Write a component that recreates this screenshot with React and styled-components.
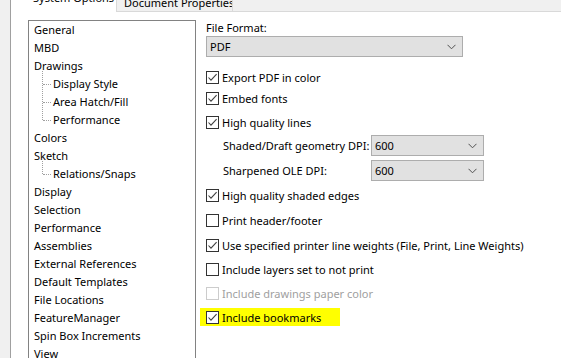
import React from 'react'
import styled, { createGlobalStyle } from 'styled-components'

const GlobalStyle = createGlobalStyle`
  html, body {
    margin: 0;
    padding: 0;
    background: #ffffff;
  }
  body {
    font-family: "Noto Sans", "Open Sans", sans-serif;
    font-size: 11px;
    color: #000000;
  }
`

const treeItems = [
  { label: 'General' },
  { label: 'MBD' },
  { label: 'Drawings', children: ['Display Style', 'Area Hatch/Fill', 'Performance'] },
  { label: 'Colors' },
  { label: 'Sketch', children: ['Relations/Snaps'] },
  { label: 'Display' },
  { label: 'Selection' },
  { label: 'Performance' },
  { label: 'Assemblies' },
  { label: 'External References' },
  { label: 'Default Templates' },
  { label: 'File Locations' },
  { label: 'FeatureManager' },
  { label: 'Spin Box Increments' },
  { label: 'View' },
]

const Chevron = () => (
  <svg width="9" height="6" viewBox="0 0 9 6">
    <polyline points="0.5,0.8 4.5,4.8 8.5,0.8" fill="none" stroke="#505050" strokeWidth="1" />
  </svg>
)

const CheckMark = () => (
  <svg width="11" height="11" viewBox="0 0 11 11">
    <polyline points="1.5,5.5 4,8.2 9.6,2.2" fill="none" stroke="#404040" strokeWidth="1.1" />
  </svg>
)

const Checkbox = ({ checked, disabled }) => (
  <Box $disabled={disabled}>{checked && <CheckMark />}</Box>
)

const Select = ({ value, width }) => (
  <SelectBox $width={width}>
    <span>{value}</span>
    <Chevron />
  </SelectBox>
)

const App = () => {
  return (
    <Window>
      <GlobalStyle />
      <Gutter />
      <Main>
        <TabStrip>
          <Tab $active>
            <TabLabel $active>System Options</TabLabel>
          </Tab>
          <Tab>
            <TabLabel>Document Properties</TabLabel>
          </Tab>
          <TabFiller />
        </TabStrip>

        <Body>
          <Tree>
            {treeItems.map((item, i) => (
              <React.Fragment key={i}>
                <TreeRow>{item.label}</TreeRow>
                {item.children && (
                  <ChildGroup>
                    {item.children.map((c) => (
                      <ChildRow key={c}>{c}</ChildRow>
                    ))}
                  </ChildGroup>
                )}
              </React.Fragment>
            ))}
          </Tree>

          <Options>
            <Label>File Format:</Label>
            <Select value="PDF" width={257} />

            <CheckRow $top={11}>
              <Checkbox checked />
              <span>Export PDF in color</span>
            </CheckRow>
            <CheckRow $top={3}>
              <Checkbox checked />
              <span>Embed fonts</span>
            </CheckRow>
            <CheckRow $top={6}>
              <Checkbox checked />
              <span>High quality lines</span>
            </CheckRow>

            <DpiRow $top={4}>
              <DpiLabel>Shaded/Draft geometry DPI:</DpiLabel>
              <Select value="600" width={113} />
            </DpiRow>
            <DpiRow $top={4}>
              <DpiLabel>Sharpened OLE DPI:</DpiLabel>
              <Select value="600" width={113} />
            </DpiRow>

            <CheckRow $top={5}>
              <Checkbox checked />
              <span>High quality shaded edges</span>
            </CheckRow>
            <CheckRow $top={7}>
              <Checkbox />
              <span>Print header/footer</span>
            </CheckRow>
            <CheckRow $top={7}>
              <Checkbox checked />
              <span>Use specified printer line weights (File, Print, Line Weights)</span>
            </CheckRow>
            <CheckRow $top={6}>
              <Checkbox />
              <span>Include layers set to not print</span>
            </CheckRow>
            <CheckRow $top={6} $disabled>
              <Checkbox disabled />
              <span>Include drawings paper color</span>
            </CheckRow>
            <CheckRow $top={6} $highlight>
              <Checkbox checked />
              <span>Include bookmarks</span>
            </CheckRow>
          </Options>
        </Body>
      </Main>
    </Window>
  )
}

const Window = styled.div`
  display: flex;
  width: 561px;
  height: 358px;
  overflow: hidden;
  background: #ffffff;
`

const Gutter = styled.div`
  width: 10px;
  flex-shrink: 0;
  background: #f0f0f0;
  border-right: 1px solid #a0a0a0;
`

const Main = styled.div`
  flex: 1;
  display: flex;
  flex-direction: column;
  min-width: 0;
`

const TabStrip = styled.div`
  display: flex;
  height: 12px;
  flex-shrink: 0;
  background: #f0f0f0;
`

const Tab = styled.div`
  box-sizing: border-box;
  height: 12px;
  overflow: hidden;
  width: ${(p) => (p.$active ? '106px' : '116px')};
  padding-left: ${(p) => (p.$active ? '22px' : '7px')};
  background: ${(p) => (p.$active ? '#ffffff' : '#f0f0f0')};
  border-right: 1px solid #d9d9d9;
  border-bottom: ${(p) => (p.$active ? 'none' : '1px solid #d9d9d9')};
  white-space: nowrap;
`

const TabLabel = styled.div`
  line-height: 16px;
  margin-top: ${(p) => (p.$active ? '-10px' : '-5px')};
`

const TabFiller = styled.div`
  flex: 1;
  border-bottom: 1px solid #d9d9d9;
`

const Body = styled.div`
  flex: 1;
  display: flex;
  align-items: flex-start;
  padding: 8px 0 0 17px;
  min-height: 0;
`

const Tree = styled.div`
  box-sizing: border-box;
  width: 168px;
  flex-shrink: 0;
  border: 1px solid #828282;
  padding: 0 0 20px 5px;
  height: 400px;
`

const TreeRow = styled.div`
  height: 18px;
  line-height: 18px;
  white-space: nowrap;
`

const ChildGroup = styled.div`
  position: relative;

  &::before {
    content: '';
    position: absolute;
    left: 8px;
    top: -4px;
    bottom: 9px;
    border-left: 1px dotted #a0a0a0;
  }
`

const ChildRow = styled(TreeRow)`
  position: relative;
  padding-left: 19px;

  &::before {
    content: '';
    position: absolute;
    left: 9px;
    top: 9px;
    width: 8px;
    border-top: 1px dotted #a0a0a0;
  }
`

const Options = styled.div`
  display: flex;
  flex-direction: column;
  align-items: flex-start;
  padding-left: 10px;
`

const Label = styled.div`
  line-height: 16px;
`

const SelectBox = styled.div`
  box-sizing: border-box;
  width: ${(p) => p.$width}px;
  height: 21px;
  display: flex;
  align-items: center;
  justify-content: space-between;
  padding: 0 6px 0 3px;
  background: #e1e1e1;
  border: 1px solid #adadad;
`

const CheckRow = styled.div`
  display: flex;
  align-items: center;
  gap: 3px;
  height: 18px;
  margin-top: ${(p) => p.$top}px;
  white-space: nowrap;
  color: ${(p) => (p.$disabled ? '#a0a0a0' : '#000000')};
  ${(p) =>
    p.$highlight &&
    `
    background: #ffff00;
    margin-left: -6px;
    padding-left: 6px;
    width: 140px;
    box-sizing: border-box;
  `}
`

const Box = styled.div`
  box-sizing: border-box;
  width: 13px;
  height: 13px;
  flex-shrink: 0;
  display: flex;
  align-items: center;
  justify-content: center;
  background: #ffffff;
  border: 1px solid ${(p) => (p.$disabled ? '#cccccc' : '#333333')};
`

const DpiRow = styled.div`
  display: flex;
  align-items: center;
  margin-top: ${(p) => p.$top}px;
  padding-left: 17px;
`

const DpiLabel = styled.div`
  width: 148px;
  white-space: nowrap;
`

export default App
